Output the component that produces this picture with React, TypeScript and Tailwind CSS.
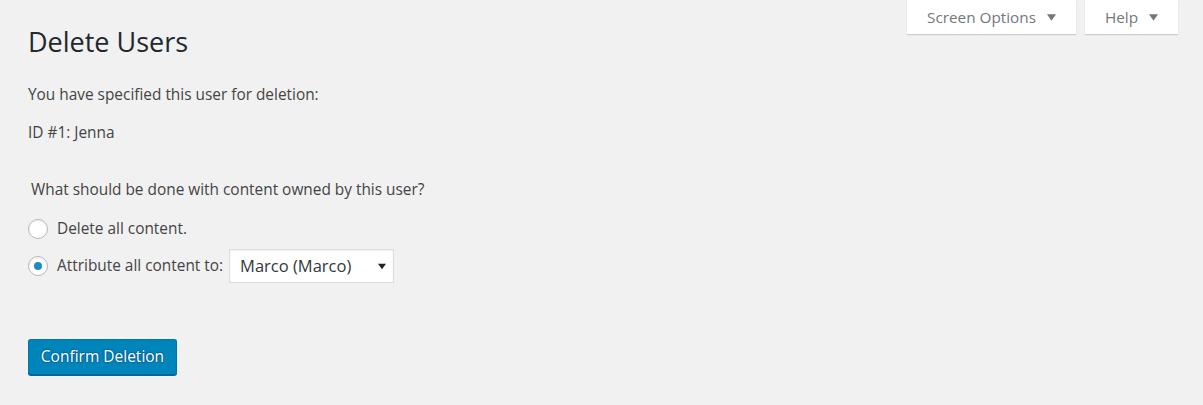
import React from 'react';

const Caret: React.FC<{ className?: string }> = ({ className }) => (
  <svg viewBox="0 0 10 7" className={className} fill="currentColor" aria-hidden="true">
    <polygon points="0,0 10,0 5,7" />
  </svg>
);

const Radio: React.FC<{ checked?: boolean }> = ({ checked }) => (
  <span className="flex h-[20px] w-[20px] shrink-0 items-center justify-center rounded-full border border-[#b4b9be] bg-white shadow-[inset_0_1px_2px_rgba(0,0,0,0.07)]">
    {checked && <span className="h-[8px] w-[8px] rounded-full bg-[#1e8cbe]" />}
  </span>
);

export default function App() {
  return (
    <div className="min-h-[405px] bg-[#f1f1f1] font-['Open_Sans',sans-serif] text-[15.4px] text-[#444]">
      {/* Header: title + screen meta tabs */}
      <div className="flex items-start justify-between pl-[28px] pr-[25px]">
        <h1 className="mt-[24px] text-[27px] leading-[36px] font-normal text-[#23282d]">Delete Users</h1>
        <div className="flex gap-[9px]">
          <button className="flex h-[34px] w-[169px] items-center justify-center gap-[11px] bg-white text-[15.3px] text-[#72777c] shadow-[0_1px_1px_rgba(0,0,0,0.15)]">
            Screen Options
            <Caret className="h-[7px] w-[9px]" />
          </button>
          <button className="flex h-[34px] w-[93px] items-center justify-center gap-[11px] bg-white text-[15.3px] text-[#72777c] shadow-[0_1px_1px_rgba(0,0,0,0.15)]">
            Help
            <Caret className="h-[7px] w-[9px]" />
          </button>
        </div>
      </div>

      <div className="pl-[28px]">
        <p className="mt-[23px] leading-[24px]">You have specified this user for deletion:</p>
        <p className="mt-[14px] leading-[24px]">ID #1: Jenna</p>

        <fieldset className="mt-[33px]">
          <p className="pl-[3px] leading-[24px]">What should be done with content owned by this user?</p>
          <ul className="mt-[15px]">
            <li className="flex items-center gap-[9px]">
              <Radio />
              <span className="leading-[24px]">Delete all content.</span>
            </li>
            <li className="mt-[8px] flex items-center gap-[9px]">
              <Radio checked />
              <span className="leading-[24px]">Attribute all content to:</span>
              <span className="-ml-[3px] flex h-[34px] w-[165px] items-center justify-between border border-[#ddd] bg-white pl-[10px] pr-[7px] text-[16.5px] text-[#32373c] shadow-[inset_0_1px_2px_rgba(0,0,0,0.07)]">
                Marco (Marco)
                <Caret className="h-[7px] w-[8px] text-[#222]" />
              </span>
            </li>
          </ul>
        </fieldset>

        <button className="mt-[56px] h-[36px] w-[149px] rounded-[3px] border border-[#0073aa] border-b-[#006799] bg-[#0085ba] text-[15.5px] text-white shadow-[0_1px_0_#006799] [text-shadow:0_-1px_1px_#006799,1px_0_1px_#006799,0_1px_1px_#006799,-1px_0_1px_#006799]">
          Confirm Deletion
        </button>
      </div>
    </div>
  );
}
